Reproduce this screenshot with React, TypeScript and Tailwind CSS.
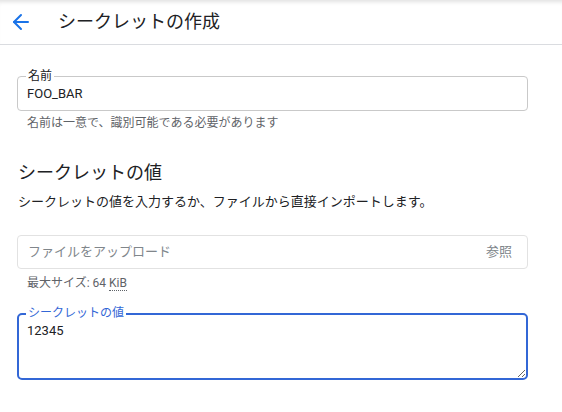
import React from "react";
import { ArrowLeft } from "lucide-react";

const font = { fontFamily: '"Roboto", "Noto Sans CJK JP", sans-serif' };

export default function App() {
    return (
        <div className="w-[562px] h-[412px] bg-white text-[#202124] overflow-hidden" style={font}>
            {/* Header */}
            <div className="h-[45px] flex items-center border-b border-[#dadce0] shadow-[inset_0_5px_4px_-3px_rgba(0,0,0,0.12)]">
                <button className="ml-[9px] w-[24px] h-[24px] flex items-center justify-center text-[#1a73e8]">
                    <ArrowLeft size={24} strokeWidth={2} />
                </button>
                <h1 className="ml-[25px] text-[18px] leading-[24px] font-normal">シークレットの作成</h1>
            </div>

            <div className="w-[511px] ml-[17px]">
                {/* Name */}
                <div className="relative mt-[31px]">
                    <span className="absolute left-[9px] -top-[6px] px-[2px] bg-white text-[12px] leading-[12px] text-[#202124]">
                        名前
                    </span>
                    <input
                        readOnly
                        value="FOO_BAR"
                        className="w-full h-[35px] border border-[#c9c9c9] rounded-[4px] pl-[9px] text-[13px] outline-none"
                    />
                </div>
                <p className="mt-[4px] pl-[10px] text-[12px] leading-[16px] text-[#5f6368]">
                    名前は一意で、識別可能である必要があります
                </p>

                {/* Secret value */}
                <h2 className="mt-[30px] pl-[1px] text-[18px] leading-[24px] font-normal">シークレットの値</h2>
                <p className="mt-[7px] pl-[1px] text-[13px] leading-[20px]">
                    シークレットの値を入力するか、ファイルから直接インポートします。
                </p>

                <div className="mt-[23px] h-[34px] border border-[#e2e2e2] rounded-[4px] flex items-center justify-between pl-[10px] pr-[15px] text-[13px] text-[#80868b]">
                    <span>ファイルをアップロード</span>
                    <span>参照</span>
                </div>
                <p className="mt-[6px] pl-[10px] text-[12px] leading-[16px] text-[#5f6368]">
                    最大サイズ: 64{" "}
                    <abbr className="no-underline border-b border-dotted border-[#5f6368]" title="Kibibyte">
                        KiB
                    </abbr>
                </p>

                <div className="relative mt-[22px]">
                    <span className="absolute left-[9px] -top-[6px] px-[2px] bg-white text-[12px] leading-[12px] text-[#3367d6] z-10">
                        シークレットの値
                    </span>
                    <textarea
                        defaultValue="12345"
                        className="block w-full h-[67px] border-2 border-[#3367d6] rounded-[5px] pl-[8px] pt-[7px] text-[13px] leading-[18px] outline-none"
                    />
                </div>
            </div>
        </div>
    );
}
